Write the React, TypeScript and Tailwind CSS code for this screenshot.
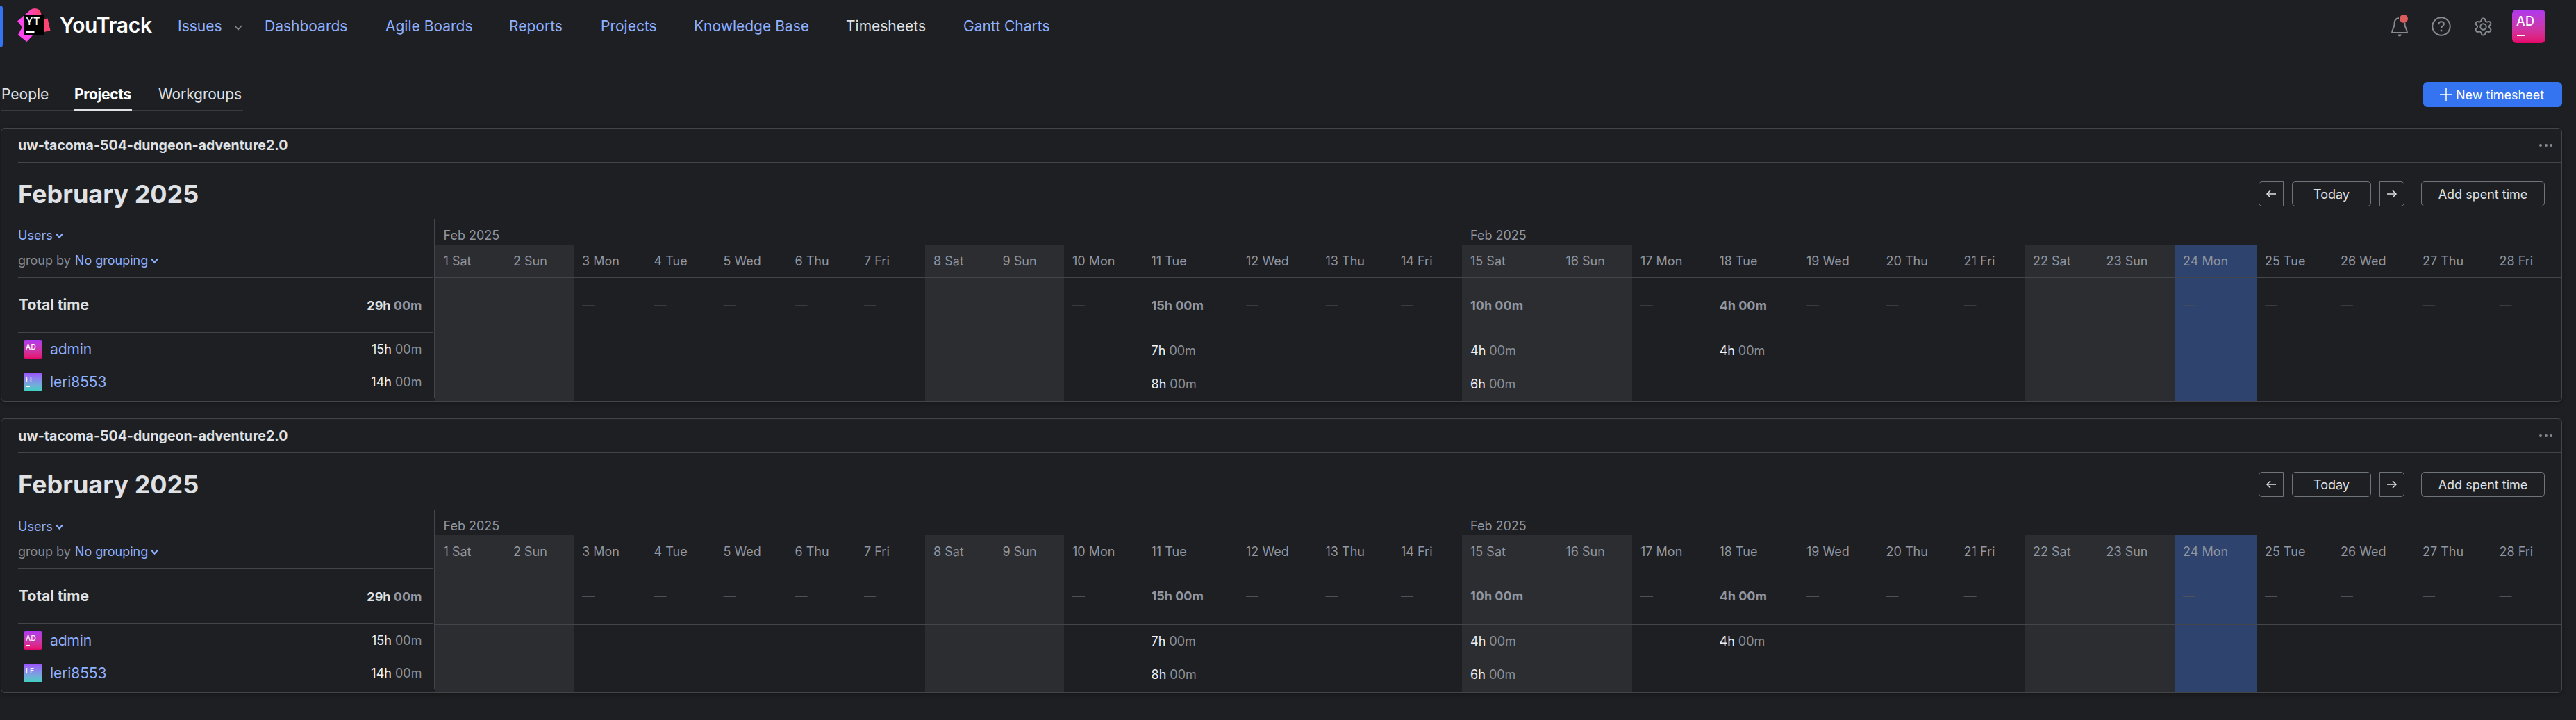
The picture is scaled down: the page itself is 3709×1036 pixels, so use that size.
import React from "react";

const LINE = "bg-[#43454a]";

// Left edge of every day column, followed by the right edge of the last one.
const starts = [626.5, 727, 826, 929.5, 1029.5, 1132.5, 1232, 1332, 1431.5, 1532, 1645.5, 1782, 1896.5, 2005, 2105, 2242.5, 2350, 2463.5, 2589, 2703.5, 2815.5, 2915, 3020.5, 3131, 3249, 3358, 3476, 3586.5, 3688];
const names = ["Sat", "Sun", "Mon", "Tue", "Wed", "Thu", "Fri"];
const weekend = (i: number) => i % 7 < 2;
const totals: Record<number, string> = { 11: "15h 00m", 15: "10h 00m", 18: "4h 00m" };
const admin: Record<number, string> = { 11: "7h", 15: "4h", 18: "4h" };
const leri: Record<number, string> = { 11: "8h", 15: "6h" };

function Chevron() {
  return (
    <svg className="mt-0.5 h-[9px] w-[11px]" viewBox="0 0 11 9" fill="none" stroke="#8fb0ff" strokeWidth="2.2">
      <path d="M1 1.5 5.5 6.5 10 1.5" />
    </svg>
  );
}

function Avatar({ kind }: { kind: "AD" | "LE" }) {
  const c = kind === "AD" ? "from-[#af37f0] to-[#e6006b]" : "from-[#9b4dff] to-[#35d2c0]";
  return (
    <span className={`flex h-[27px] w-[27px] flex-col rounded-[3px] bg-linear-to-b pl-[3px] ${c}`}>
      <span className="mt-[4.5px] text-[10px] leading-[10px] font-medium tracking-[0.4px] text-white">{kind}</span>
      <span className="mt-[5.5px] h-px w-[6px] bg-white" />
    </span>
  );
}

function Time({ h }: { h: string }) {
  return (
    <span className="text-[18px] leading-[27px] whitespace-pre text-[#f0f1f4]">
      {h} <span className="text-[#8b9099]">00m</span>
    </span>
  );
}

function UserRow({ kind, name, time }: { kind: "AD" | "LE"; name: string; time: string }) {
  return (
    <div className="flex h-[47px] items-center pr-4 pl-[8px]">
      <Avatar kind={kind} />
      <span className="ml-[11px] flex-1 text-[21px] leading-[27px] tracking-[-0.1px] text-[#8fb0ff]">{name}</span>
      <Time h={time} />
    </div>
  );
}

function Card({ tall = false }: { tall?: boolean }) {
  return (
    <section className={`ml-px w-[3688px] overflow-hidden rounded-[6px] border border-[#43454a] shadow-[0_2px_6px_rgba(0,0,0,0.3)] ${tall ? "h-[395px]" : "h-[394px]"}`}>
      <header className="ml-[24px] flex h-[49px] items-center justify-between border-b border-[#43454a]">
        <h2 className="pt-px text-[19.5px] font-bold text-[#dfe1e5]">uw-tacoma-504-dungeon-adventure2.0</h2>
        <span className="mr-[13px] flex gap-[3.5px]">
          <i className="size-1 rounded-full bg-[#868a91]" />
          <i className="size-1 rounded-full bg-[#868a91]" />
          <i className="size-1 rounded-full bg-[#868a91]" />
        </span>
      </header>
      <div className={`flex items-start justify-between pt-[27px] pr-6 pl-[24px] ${tall ? "h-[82px]" : "h-[81px]"}`}>
        <h1 className="mt-[-4px] text-[36px] leading-[44px] font-bold text-[#dfe1e5]">February 2025</h1>
        <div className="flex text-[18px] text-[#dfe1e5]">
          <button className="flex size-9 items-center justify-center rounded-l-[5px] border border-[#6f737a]">
            <svg className="h-3 w-4" viewBox="0 0 16 12" fill="none" stroke="currentColor" strokeWidth="1.5"><path d="M15 6H2M7 1 2 6 7 11" /></svg>
          </button>
          <button className="ml-3 h-9 w-[114px] rounded-[5px] border border-[#6f737a]">Today</button>
          <button className="ml-3 flex size-9 items-center justify-center rounded-r-[5px] border border-[#6f737a]">
            <svg className="h-3 w-4" viewBox="0 0 16 12" fill="none" stroke="currentColor" strokeWidth="1.5"><path d="M1 6H14M9 1 14 6 9 11" /></svg>
          </button>
          <button className="ml-6 h-9 w-[178px] rounded-[5px] border border-[#6f737a]">Add spent time</button>
        </div>
      </div>
      <div className="flex h-[262px]">
        <aside className="ml-6 w-[598px] text-[18px]">
          <div className="flex h-[85px] flex-col gap-[9px] border-b border-[#43454a] pt-[10px] leading-[27px]">
            <div className="flex items-center gap-[4px] text-[#8fb0ff]">Users <Chevron /></div>
            <div className="flex items-center gap-[4px] text-[#8fb0ff]">
              <span className="mr-[2px] text-[#868a91]">group by</span>No grouping <Chevron />
            </div>
          </div>
          <div className="flex h-[79px] items-center justify-between border-b border-[#43454a] pr-4 pl-px font-bold text-[#dfe1e5]">
            <span className="text-[21px]">Total time</span>
            <span>29h <span className="text-[#9196a0]">00m</span></span>
          </div>
          <UserRow kind="AD" name="admin" time="15h" />
          <UserRow kind="LE" name="leri8553" time="14h" />
        </aside>
        <div className={`mr-px ml-px h-[258px] w-px ${LINE}`} />
        <div className={`flex text-[18px] leading-[27px] ${tall ? "-mt-px" : ""}`}>
          {starts.slice(0, 28).map((s, i) => {
            const d = i + 1;
            const bg = d === 24 ? "bg-[#2e436e]" : weekend(i) ? "bg-[#2b2d30]" : "";
            return (
              <div key={d} style={{ width: starts[i + 1] - s }} className="flex h-[262px] flex-col whitespace-nowrap text-[#9196a0]">
                <div className="h-[37px] pt-[10px] pl-[12px]">{d === 1 || d === 15 ? "Feb 2025" : ""}</div>
                <div className={`flex-1 ${bg}`}>
                  <div className="h-[48px] border-b border-[#43454a] pt-[10px] pl-[12px]">{d} {names[i % 7]}</div>
                  <div className="flex h-[81px] items-center border-b border-[#43454a] pb-px pl-[12px]">
                    {totals[d] ? <b className="font-bold">{totals[d]}</b> : weekend(i) ? null : <span className="text-[#4e5157]">—</span>}
                  </div>
                  <div className="h-[48px] pt-[10px] pl-[12px]">{admin[d] && <Time h={admin[d]} />}</div>
                  <div className="h-[48px] pt-[10px] pl-[12px]">{leri[d] && <Time h={leri[d]} />}</div>
                </div>
              </div>
            );
          })}
        </div>
      </div>
    </section>
  );
}

const links: [string, number][] = [["Dashboards", 174], ["Agile Boards", 178], ["Reports", 132], ["Projects", 134], ["Knowledge Base", 219], ["Timesheets", 169], ["Gantt Charts", 140]];

export default function App() {
  return (
    <div className="h-[1036px] w-[3709px] overflow-hidden bg-[#1e1f22] font-['Inter',sans-serif]">
      <nav className="flex h-[76px] items-center text-[21px] text-[#8fb0ff]">
        <span className="h-[60px] w-1 rounded-r-[4px] bg-[#3574f0]" />
        <svg className="mt-[-4px] ml-[21px] size-12" viewBox="0 0 48 48">
          <defs>
            <linearGradient id="yt" x1="0" y1=".6" x2="1" y2=".3">
              <stop offset=".3" stopColor="#ff45ed" />
              <stop offset=".75" stopColor="#fd4472" />
            </linearGradient>
          </defs>
          <path fill="url(#yt)" d="M0 18.5 18 3Q21 0 25 0 34 0 34.500 10V16L43.500 14.500 47.500 32 34 35 22 39 13.500 48 1 38 7 27Z" />
          <path d="M9 9h30v30H9z" />
          <path fill="#fff" d="M13 33h11.500v2H13z" />
          <text x="12" y="24" fill="#fff" fontSize="15" fontWeight="500" fontFamily="Inter">YT</text>
        </svg>
        <span className="mt-[-4px] ml-[13px] w-[134px] text-[30px] font-semibold tracking-[-0.3px] text-white">YouTrack</span>
        <div className="flex w-[161px] items-center pl-[36px]">Issues
          <i className="ml-2 h-[26px] w-px bg-[#6f737a]" />
          <svg className="mt-1 ml-2 h-2 w-3" viewBox="0 0 12 8" fill="none" stroke="#868a91" strokeWidth="1.7"><path d="M1 1 6 6.5 11 1" /></svg>
        </div>
        {links.map(([t, w]) => (
          <span key={t} style={{ width: w }} className={t === "Timesheets" ? "whitespace-nowrap text-[#dfe1e5]" : "whitespace-nowrap"}>{t}</span>
        ))}
        <div className="ml-auto flex items-center gap-6 pr-[44px] text-[#868a91]">
          <svg className="size-9" viewBox="0 0 36 36" fill="none" stroke="currentColor" strokeWidth="2">
            <path d="M17 6C12 6.500 10.500 10 10.500 14V16C10 20 7 23 7 27H29C29 23 26 20 25.500 16V13" />
            <path fill="currentColor" stroke="none" d="M15 29.500H21Q20 32.500 18 32.500 16 32.500 15 29.500Z" />
            <circle cx="24" cy="7" r="6" fill="#db5c5c" stroke="none" />
          </svg>
          <svg className="size-9" viewBox="0 0 36 36" fill="none" stroke="currentColor" strokeWidth="2">
            <circle cx="18" cy="18" r="12.700" />
            <path d="M14.300 15.200C14.300 12.700 16 11.300 18.100 11.300 20.300 11.300 21.900 12.700 21.900 14.700 21.900 17.500 18 17.500 18 20.500V21" />
            <circle cx="18" cy="24" r="1.500" fill="currentColor" stroke="none" />
          </svg>
          <svg className="mx-[3.5px] size-[29px]" viewBox="0 0 24 24" fill="none" stroke="currentColor" strokeWidth="1.600" strokeLinejoin="round">
            <path d="M9.671 4.136a2.340 2.340 0 0 1 4.659 0 2.340 2.340 0 0 0 3.319 1.915 2.340 2.340 0 0 1 2.330 4.033 2.340 2.340 0 0 0 0 3.831 2.340 2.340 0 0 1-2.330 4.033 2.340 2.340 0 0 0-3.319 1.915 2.340 2.340 0 0 1-4.659 0 2.340 2.340 0 0 0-3.320-1.915 2.340 2.340 0 0 1-2.330-4.033 2.340 2.340 0 0 0 0-3.831A2.340 2.340 0 0 1 6.350 6.051a2.340 2.340 0 0 0 3.319-1.915" />
            <circle cx="12" cy="12" r="3.500" />
          </svg>
          <span className="flex size-12 flex-col rounded-[6px] bg-linear-to-b from-[#af37f0] to-[#e6006b] pl-[6px]">
            <span className="mt-[7px] text-[18px] leading-[19px] font-medium tracking-[0.3px] text-white">AD</span>
            <span className="mt-[10px] ml-px h-[1.5px] w-[11px] bg-white" />
          </span>
        </div>
      </nav>
      <div className="flex h-[108px] items-start justify-between pr-5">
        <div className="ml-px flex h-[84px] w-[349px] items-end border-b-2 border-[#393b40] text-[21px] leading-[27px] text-[#dfe1e5]">
          <span className="w-[106px] pb-[9px] pl-px">People</span>
          <span className="mb-[-2px] h-[38px] w-[83px] border-b-[3px] border-[#dfe1e5] font-bold whitespace-nowrap text-white">
            <span className="tracking-[-0.3px]">Projects</span>
          </span>
          <span className="ml-[38px] pb-[9px] tracking-[-0.1px]">Workgroups</span>
        </div>
        <button className="mt-[42px] flex h-9 w-[200px] items-center rounded-[6px] bg-[#3574f0] pl-[24px] text-[18px] whitespace-nowrap text-white">
          <svg className="mr-[5px] size-[18px]" viewBox="0 0 18 18" stroke="currentColor" strokeWidth="1.500"><path d="M9 0V18M0 9H18" /></svg>
          New timesheet
        </button>
      </div>
      <Card />
      <div className="h-6" />
      <Card tall />
    </div>
  );
}
